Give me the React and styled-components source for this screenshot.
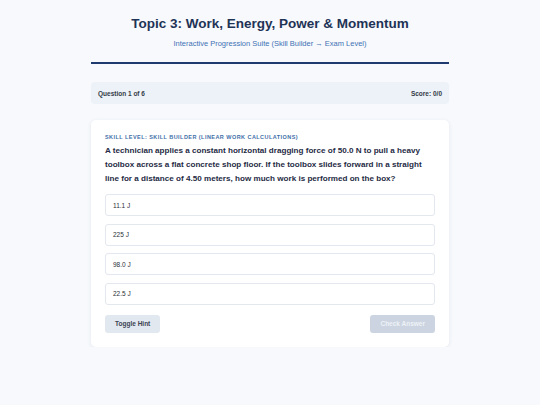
import styled, { createGlobalStyle } from "styled-components";

const GlobalStyle = createGlobalStyle`
  html, body {
    margin: 0;
    padding: 0;
    background-color: #f7f9fc;
    font-family: "Liberation Sans", Arial, sans-serif;
  }
`;

const Container = styled.div`
  width: 358px;
  margin: 0 auto;
  padding-top: 15px;
`;

const Header = styled.header`
  text-align: center;
  padding-bottom: 13px;
  border-bottom: 2px solid #1e3a6e;
`;

const Title = styled.h1`
  margin: 0;
  font-size: 13.5px;
  line-height: 18px;
  font-weight: 700;
  color: #1e3356;
`;

const Subtitle = styled.p`
  margin: 6px 0 0;
  font-size: 7.5px;
  line-height: 10px;
  color: #3f72b5;
`;

const StatusBar = styled.div`
  margin-top: 18px;
  height: 22px;
  padding: 0 7px;
  display: flex;
  align-items: center;
  justify-content: space-between;
  background-color: #edf2f8;
  border-radius: 4px;
  font-size: 6.5px;
  font-weight: 700;
  color: #333b47;
`;

const Card = styled.div`
  margin-top: 16px;
  background-color: #ffffff;
  border-radius: 5px;
  box-shadow: 0 1px 4px rgba(30, 50, 90, 0.09);
  padding: 14px;
`;

const SkillLevel = styled.div`
  font-size: 5.5px;
  line-height: 6px;
  font-weight: 700;
  letter-spacing: 0.45px;
  text-transform: uppercase;
  color: #3f6fa8;
`;

const Question = styled.p`
  margin: 4px 0 8px;
  font-size: 8.1px;
  line-height: 14px;
  font-weight: 700;
  color: #1f2b45;
`;

const Options = styled.div`
  display: flex;
  flex-direction: column;
  gap: 7.5px;
`;

const Option = styled.button`
  height: 22px;
  padding: 0 7px;
  text-align: left;
  background-color: #ffffff;
  border: 1px solid #e3e7ee;
  border-radius: 3px;
  font-family: inherit;
  font-size: 6.5px;
  color: #2a2f38;
  cursor: pointer;
`;

const Actions = styled.div`
  margin-top: 10px;
  display: flex;
  justify-content: space-between;
`;

const Button = styled.button`
  height: 18px;
  padding: 0 10px;
  border: none;
  border-radius: 3px;
  font-family: inherit;
  font-size: 6.5px;
  font-weight: 700;
  background-color: ${(p) => (p.$disabled ? "#cbd4e0" : "#e2e8f0")};
  color: ${(p) => (p.$disabled ? "#eef2f7" : "#3a4352")};
  cursor: ${(p) => (p.$disabled ? "not-allowed" : "pointer")};
`;

const answers = ["11.1 J", "225 J", "98.0 J", "22.5 J"];

export default function App() {
  return (
    <>
      <GlobalStyle />
      <Container>
        <Header>
          <Title>Topic 3: Work, Energy, Power &amp; Momentum</Title>
          <Subtitle>Interactive Progression Suite (Skill Builder → Exam Level)</Subtitle>
        </Header>
        <StatusBar>
          <span>Question 1 of 6</span>
          <span>Score: 0/0</span>
        </StatusBar>
        <Card>
          <SkillLevel>Skill Level: Skill Builder (Linear Work Calculations)</SkillLevel>
          <Question>
            A technician applies a constant horizontal dragging force of 50.0 N to pull a heavy
            toolbox across a flat concrete shop floor. If the toolbox slides forward in a straight
            line for a distance of 4.50 meters, how much work is performed on the box?
          </Question>
          <Options>
            {answers.map((a) => (
              <Option key={a}>{a}</Option>
            ))}
          </Options>
          <Actions>
            <Button>Toggle Hint</Button>
            <Button $disabled disabled>
              Check Answer
            </Button>
          </Actions>
        </Card>
      </Container>
    </>
  );
}
